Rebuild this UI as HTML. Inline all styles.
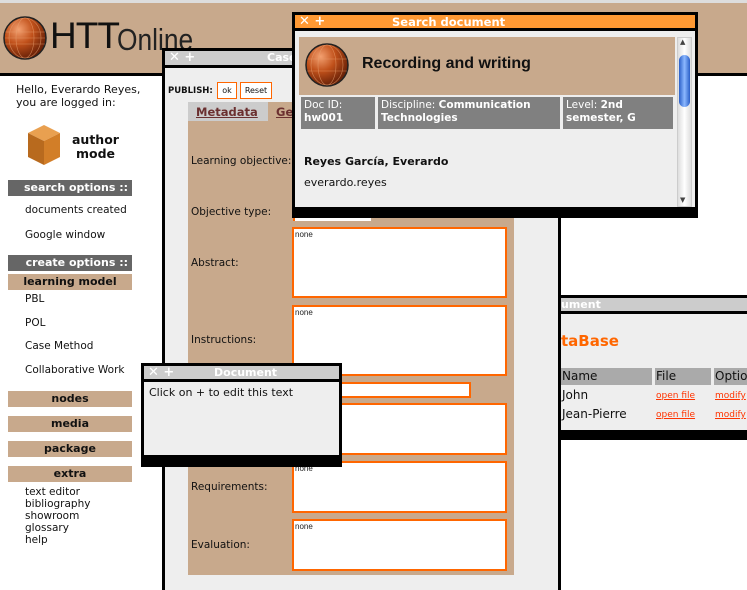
<!DOCTYPE html>
<html style="width:747px;height:590px;overflow:hidden"><head><meta charset="utf-8"><style>
*{margin:0;padding:0;box-sizing:border-box}
body{width:747px;height:590px;overflow:hidden;background:#fff;font-family:"DejaVu Sans","Liberation Sans",sans-serif;position:relative;font-size:11px;color:#111}
.a{position:absolute}
.hdr{left:0;top:3px;width:747px;height:70px;background:#c8a98c}
.topstrip{left:0;top:0;width:747px;height:3px;background:#ddd}
.bar{position:absolute;left:8px;width:124px;height:16px;font-weight:bold;text-align:center;font-size:11px;line-height:16px}
.dark{background:#666;color:#fff;text-align:right;padding-right:4px}
.tan{background:#c8a98c;color:#111}
.lnk{position:absolute;left:25px;font-size:10.5px;color:#111}
.win{position:absolute;border:3px solid #000;background:#eee}
.tb{position:absolute;left:0;right:0;top:0;height:14px;color:#fff;font-weight:bold;font-size:11px;line-height:14px}
.tb .x{font-size:13px;margin-left:4px}
.ta{position:absolute;background:#fff;border:2px solid #f60;font-size:8px;padding:1px 1px;color:#222;font-family:"Liberation Sans",sans-serif}
.lbl{position:absolute;left:191px;font-size:10.5px}
</style></head><body>
<div class="a topstrip"></div>
<div class="a hdr"></div>
<div class="a" style="left:0;top:73px;width:747px;height:3px;background:#000"></div>
<svg class="a" style="left:3px;top:16px" width="44" height="44" viewBox="0 0 44 44"><defs><radialGradient id="g" cx="35%" cy="30%" r="70%"><stop offset="0" stop-color="#f3a070"/><stop offset=".5" stop-color="#c0501a"/><stop offset="1" stop-color="#6a2208"/></radialGradient></defs><circle cx="22" cy="22" r="21" fill="url(#g)" stroke="#222" stroke-width="1.5"/><g stroke="#e8a070" stroke-width=".6" fill="none" opacity=".7"><ellipse cx="22" cy="22" rx="9" ry="20"/><ellipse cx="22" cy="22" rx="16" ry="20"/><line x1="2" y1="16" x2="42" y2="16"/><line x1="2" y1="28" x2="42" y2="28"/><line x1="2" y1="22" x2="42" y2="22"/></g></svg>
<div class="a" style="left:50px;top:16px;font-size:37px;line-height:40px;font-family:'Liberation Sans',sans-serif;color:#111;letter-spacing:-1px">HTT</div>
<div class="a" style="left:117px;top:23px;font-size:31px;line-height:34px;font-family:'Liberation Sans',sans-serif;color:#222;transform:scaleX(.85);transform-origin:left">Online</div>
<div class="a" style="left:16px;top:83px;font-size:11px;line-height:13px">Hello, Everardo Reyes,<br>you are logged in:</div>
<svg class="a" style="left:24px;top:123px" width="40" height="44" viewBox="0 0 40 44"><polygon points="4,10 20,2 36,10 20,18" fill="#e9a050"/><polygon points="4,10 20,18 20,42 4,34" fill="#b86a1e"/><polygon points="36,10 20,18 20,42 36,34" fill="#d27e28"/></svg>
<div class="a" style="left:72px;top:133px;font-weight:bold;font-size:12.5px;line-height:14px;text-align:center">author<br>mode</div>
<div class="bar dark" style="top:180px">search options ::</div>
<div class="lnk" style="top:204px">documents created</div>
<div class="lnk" style="top:229px">Google window</div>
<div class="bar dark" style="top:255px">create options ::</div>
<div class="bar tan" style="top:274px">learning model</div>
<div class="lnk" style="top:293px">PBL</div>
<div class="lnk" style="top:317px">POL</div>
<div class="lnk" style="top:340px">Case Method</div>
<div class="lnk" style="top:364px">Collaborative Work</div>
<div class="bar tan" style="top:391px">nodes</div>
<div class="bar tan" style="top:416px">media</div>
<div class="bar tan" style="top:441px">package</div>
<div class="bar tan" style="top:466px">extra</div>
<div class="lnk" style="top:486px;line-height:12px">text editor<br>bibliography<br>showroom<br>glossary<br>help</div>

<div class="a" style="left:558px;top:217px;width:3px;height:373px;background:#000"></div>
<div class="a" style="left:561px;top:295px;width:186px;height:3px;background:#000"></div>
<div class="a" style="left:561px;top:298px;width:186px;height:13px;background:#ccc;color:#fff;font-weight:bold;font-size:11px;line-height:13px">ument</div>
<div class="a" style="left:561px;top:311px;width:186px;height:3px;background:#000"></div>
<div class="a" style="left:561px;top:314px;width:186px;height:116px;background:#eee"></div>
<div class="a" style="left:561px;top:332px;color:#f60;font-weight:bold;font-size:15px">taBase</div>
<div class="a" style="left:561px;top:368px;width:91px;height:17px;background:#aaa;font-size:12px;line-height:17px;padding-left:1px">Name</div>
<div class="a" style="left:655px;top:368px;width:56px;height:17px;background:#aaa;font-size:12px;line-height:17px;padding-left:1px">File</div>
<div class="a" style="left:714px;top:368px;width:33px;height:17px;background:#aaa;font-size:12px;line-height:17px;padding-left:1px;overflow:hidden">Options</div>
<div class="a" style="left:562px;top:388px;font-size:12px">John</div>
<div class="a" style="left:562px;top:407px;font-size:12px">Jean-Pierre</div>
<div class="a" style="left:656px;top:391px;font-size:9px;color:#f30;text-decoration:underline">open file</div>
<div class="a" style="left:715px;top:391px;font-size:9px;color:#f30;text-decoration:underline">modify</div>
<div class="a" style="left:656px;top:410px;font-size:9px;color:#f30;text-decoration:underline">open file</div>
<div class="a" style="left:715px;top:410px;font-size:9px;color:#f30;text-decoration:underline">modify</div>
<div class="a" style="left:561px;top:430px;width:186px;height:10px;background:#000"></div>

<div class="win" style="left:162px;top:48px;width:399px;height:550px">
 <div class="tb" style="background:#ccc;border-bottom:3px solid #000;height:17px"><span class="x">✕ +</span><span style="position:absolute;left:102px">Case</span></div>
 <div class="a" style="left:3px;top:35px;font-weight:bold;font-size:8.5px">PUBLISH:</div>
 <div class="a" style="left:52px;top:31px;width:20px;height:17px;background:#fff;border:1px solid #f60;font-size:8px;text-align:center;line-height:15px">ok</div>
 <div class="a" style="left:75px;top:31px;width:32px;height:17px;background:#fff;border:1px solid #f60;font-size:8px;text-align:center;line-height:15px">Reset</div>
</div>
<div class="a" style="left:188px;top:102px;width:326px;height:473px;background:#c8a98c"></div>
<div class="a" style="left:188px;top:102px;width:80px;height:19px;background:#ccc"></div>
<div class="a" style="left:196px;top:105px;font-weight:bold;color:#6b3030;text-decoration:underline;font-size:11.5px">Metadata</div>
<div class="a" style="left:276px;top:105px;font-weight:bold;color:#6b3030;text-decoration:underline;font-size:11.5px">Ge</div>
<div class="lbl" style="top:155px">Learning objective:</div>
<div class="lbl" style="top:206px">Objective type:</div>
<div class="lbl" style="top:257px">Abstract:</div>
<div class="lbl" style="top:334px">Instructions:</div>
<div class="lbl" style="top:481px">Requirements:</div>
<div class="lbl" style="top:539px">Evaluation:</div>
<div class="ta" style="left:292px;top:227px;width:215px;height:71px">none</div>
<div class="ta" style="left:292px;top:305px;width:215px;height:71px">none</div>
<div class="ta" style="left:292px;top:382px;width:179px;height:16px"></div>
<div class="ta" style="left:292px;top:403px;width:215px;height:52px"></div>
<div class="ta" style="left:292px;top:461px;width:215px;height:52px">none</div>
<div class="ta" style="left:292px;top:519px;width:215px;height:52px">none</div>
<div class="a" style="left:293px;top:215px;width:78px;height:6px;background:#fff;border-left:2px solid #f60"></div>

<div class="win" style="left:292px;top:12px;width:406px;height:206px">
 <div class="tb" style="background:#f93;height:16px;border-bottom:3px solid #000"><span class="x">✕ +</span><span style="position:absolute;left:97px;font-size:11.5px">Search document</span></div>
 <div class="a" style="left:4px;top:22px;width:376px;height:170px;background:#eee"></div>
 <div class="a" style="left:4px;top:22px;width:376px;height:58px;background:#c8a98c"></div>
 <svg class="a" style="left:10px;top:28px" width="44" height="44" viewBox="0 0 44 44"><defs><radialGradient id="g2" cx="35%" cy="30%" r="70%"><stop offset="0" stop-color="#f3a070"/><stop offset=".5" stop-color="#c0501a"/><stop offset="1" stop-color="#6a2208"/></radialGradient></defs><circle cx="22" cy="22" r="21" fill="url(#g2)" stroke="#222" stroke-width="1.5"/><g stroke="#e8a070" stroke-width=".6" fill="none" opacity=".7"><ellipse cx="22" cy="22" rx="9" ry="20"/><ellipse cx="22" cy="22" rx="16" ry="20"/><line x1="2" y1="16" x2="42" y2="16"/><line x1="2" y1="28" x2="42" y2="28"/></g></svg>
 <div class="a" style="left:67px;top:40px;font-weight:bold;font-size:16px;font-family:'Liberation Sans',sans-serif">Recording and writing</div>
 <div class="a" style="left:6px;top:82px;width:74px;height:32px;background:#808080;color:#fff;font-size:10.5px;line-height:13px;padding:2px 3px">Doc ID:<br><b>hw001</b></div>
 <div class="a" style="left:83px;top:82px;width:182px;height:32px;background:#808080;color:#fff;font-size:10.5px;line-height:13px;padding:2px 3px">Discipline: <b>Communication Technologies</b></div>
 <div class="a" style="left:268px;top:82px;width:110px;height:32px;background:#808080;color:#fff;font-size:10.5px;line-height:13px;padding:2px 3px">Level: <b>2nd semester, G</b></div>
 <div class="a" style="left:9px;top:140px;font-weight:bold;font-size:11px">Reyes García, Everardo</div>
 <div class="a" style="left:9px;top:161px;font-size:11px">everardo.reyes</div>
 <div class="a" style="left:382px;top:22px;width:15px;height:170px;background:linear-gradient(90deg,#ddd,#fff,#ddd);border:1px solid #ccc"></div>
 <div class="a" style="left:384px;top:40px;width:11px;height:52px;border-radius:6px;background:linear-gradient(90deg,#2a5fc8,#8cb8ff,#2a5fc8)"></div>
 <div class="a" style="left:385px;top:23px;font-size:7px;color:#444">▲</div>
 <div class="a" style="left:385px;top:181px;font-size:7px;color:#444">▼</div>
 <div class="a" style="left:0;top:192px;width:400px;height:10px;background:#000"></div>
</div>

<div class="win" style="left:141px;top:363px;width:201px;height:104px">
 <div class="tb" style="background:#ccc;height:16px;border-bottom:3px solid #000"><span class="x">✕ +</span><span style="position:absolute;left:70px">Document</span></div>
 <div class="a" style="left:5px;top:20px;font-size:11px">Click on + to edit this text</div>
 <div class="a" style="left:0;top:89px;width:195px;height:9px;background:#000"></div>
</div>
</body></html>
